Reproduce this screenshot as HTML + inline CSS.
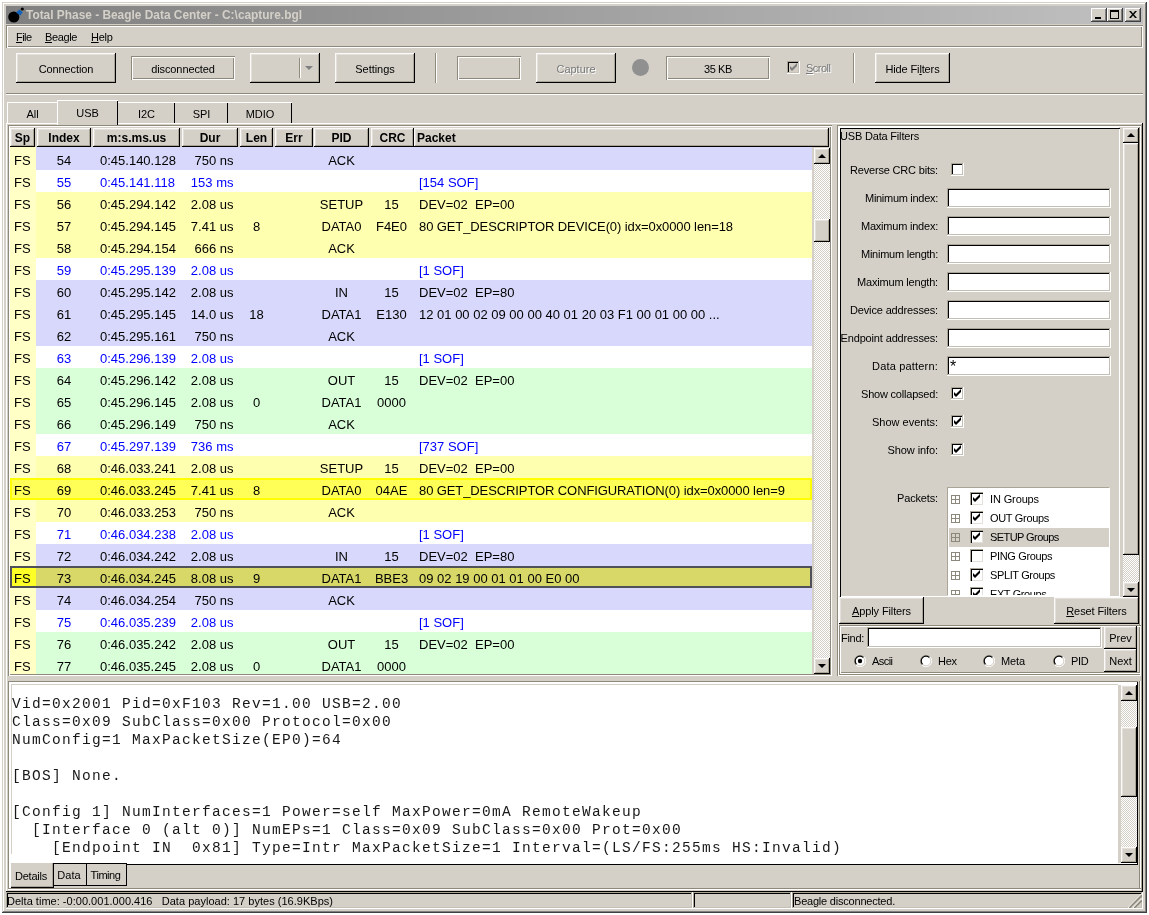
<!DOCTYPE html>
<html><head><meta charset="utf-8"><title>Beagle Data Center</title>
<style>
*{box-sizing:border-box;margin:0;padding:0}
html,body{width:1149px;height:915px;overflow:hidden;background:#fff}
body{font-family:"Liberation Sans",sans-serif;font-size:11px;color:#000;position:relative}
.win *{position:absolute}
i{font-style:normal}
u{text-decoration:underline;text-decoration-thickness:1px;text-underline-offset:1px;position:static!important}
.win{will-change:transform;position:absolute;left:2px;top:2px;width:1145px;height:911px;background:#d4d0c8;
 box-shadow:inset -1px -1px #404040,inset 1px 1px #d4d0c8,inset -2px -2px #808080,inset 2px 2px #fff}
.raised{background:#d4d0c8;box-shadow:inset -1px -1px #000,inset 1px 1px #fbfaf9,inset -2px -2px #aba597,inset 2px 2px #e3e0db}
.sysbtn{background:#d4d0c8;box-shadow:inset -1px -1px #404040,inset 1px 1px #fff,inset -2px -2px #808080,inset 2px 2px #d4d0c8}
.sunken{box-shadow:inset -1px -1px #fff,inset 1px 1px #aba597,inset -2px -2px #c4bfb5,inset 2px 2px #000}
.btn{text-align:center;white-space:nowrap}
.t{white-space:nowrap;font-size:11px}
.dis{color:#787878;text-shadow:1px 1px 0 #fff}
/* title */
.title{left:4px;top:4px;width:1137px;height:18px;background:linear-gradient(90deg,#808080,#c0c0c0)}
.title .cap{left:20px;top:1px;color:#d4d0c8;font-weight:bold;font-size:11.9px;line-height:16px;white-space:nowrap}
.cb{width:16px;height:14px;top:2px}
/* table */
.r{left:0;width:802px;height:22px;font-size:13px;line-height:26px;white-space:pre;overflow:hidden}
.r i{top:0;height:22px}
.r .sp{left:0;width:26px;background:#ffffc6;padding-left:4px}
.in{background:#d8d8fc}.sof{background:#fff;color:#0000ff}.setup{background:#ffffb0}.out{background:#d8ffd8}
.hl{background:#ffff58;box-shadow:inset 0 0 0 2px #ffff00}.hl .sp{background:transparent!important}
.sel{background:#d8d868}.sel .sp{background:#ffff28!important}
.sel:after{content:'';position:absolute;left:0;top:0;right:0;bottom:0;box-shadow:inset 0 0 0 2px #505058}
.hl:after{content:'';position:absolute;left:0;top:0;right:0;bottom:0;box-shadow:inset 0 0 0 2px #ffff00}
.r .ix{left:26px;width:56px;text-align:center}
.r .ts{left:90px}
.r .du{left:173.5px;width:50px;text-align:right}
.r .ln{left:230px;width:33px;text-align:center}
.r .pi{left:303px;width:57px;text-align:center}
.r .cr{left:360px;width:43px;text-align:center}
.r .pk{left:409px}
.sof .sp{color:#000}
.hd{top:1px;height:19px;font-weight:bold;font-size:12px;line-height:20px;text-align:center;white-space:nowrap}
.mono{font-family:"Liberation Mono",monospace;font-size:14.5px;letter-spacing:1.3px;line-height:18px;white-space:pre;color:#181818}
.arr-d{width:0;height:0;border:4px solid transparent;border-bottom:0;border-top:4px solid #000}
.arr-u{width:0;height:0;border:4px solid transparent;border-top:0;border-bottom:4px solid #000}
.vsep{width:2px;background:linear-gradient(90deg,#8f897c 50%,#fff 50%)}
.hsep{height:2px;background:linear-gradient(180deg,#8f897c 50%,#fff 50%)}
.chk{left:3px;top:3px;width:7px;height:7px;overflow:visible}
.nbpage{box-shadow:inset -1px -1px #000,inset 1px 1px #fff,inset -2px 0 #aba597}
.tab{text-align:center;font-size:11px;white-space:nowrap;background:#d4d0c8;
 box-shadow:inset 0 1px #fff,inset -1px 0 #000}
.seltab{z-index:2;box-shadow:inset 1px 1px #fff,inset -1px 0 #000}
.sbv{background:#eae8e4;background-image:conic-gradient(#fff 25%,#d4d0c8 0 50%,#fff 0 75%,#d4d0c8 0);background-size:2px 2px}
.rp-content{box-shadow:inset 1px 1px #000,inset -1px -1px #fff,-1px -1px 0 #fff}
.lab{right:209px;text-align:right}
.inp{left:945px;width:164px;height:20px;background:#fff}
.cbx{width:13px;height:13px;background:#fff}
.tree{background:#fff;border:1px solid #aba597;border-right-color:#fff;border-bottom-color:#fff;overflow:hidden}
.tr{left:1px;width:160px;height:19px}
.tr .pl{left:2px;top:5px;width:9px;height:9px;border:1px solid #8c887c;background:linear-gradient(#8c887c,#8c887c) 3px 0/1px 7px no-repeat,linear-gradient(#8c887c,#8c887c) 0 3px/7px 1px no-repeat}
.tr .tcb{left:21px;top:2px;width:13px;height:13px;background:#fff;box-shadow:inset 1px 1px #aba597,inset 2px 2px #000,inset -1px -1px #e3e0db}
.tr span{left:41px;top:3px}
.btab{text-align:center;font-size:11px;white-space:nowrap;background:#d4d0c8;box-shadow:inset 0 1px #000,inset -1px -1px #000,inset 1px 0 #000}
.bsel{z-index:2;box-shadow:inset 1px 0 #fff,inset -1px -1px #000,inset -2px -2px #aba597}
.etched{box-shadow:inset 1px 1px #8f897c,inset -1px -1px #fff,inset 2px 2px #fff,inset -2px -2px #8f897c}
.r.first i{top:1px}
.r.first .sp{top:0;height:23px;line-height:28px}

</style></head>
<body>
<div class="win">
 <div class="title"><span class="cap">Total Phase - Beagle Data Center - C:\capture.bgl</span>
  <svg style="left:1px;top:0" width="18" height="18" viewBox="0 0 18 18"><circle cx="6.8" cy="11" r="5.6" fill="#000"/><path d="M9 6.5 L12.5 3.6 L15.6 6.2 L13.4 9.6 Z" fill="#1060b8"/><circle cx="15.3" cy="3" r="1.6" fill="#000"/></svg>
  <div class="sysbtn cb" style="left:1085px"><b style="left:4px;top:9px;width:6px;height:2px;background:#000"></b></div>
  <div class="sysbtn cb" style="left:1101px"><b style="left:3px;top:2px;width:9px;height:9px;border:1px solid #000;border-top-width:2px"></b></div>
  <div class="sysbtn cb" style="left:1119px"><svg style="left:4px;top:3px" width="8" height="7" viewBox="0 0 8 7"><path d="M0 0h2l2 2.5L6 0h2L5 3.5 8 7H6L4 4.5 2 7H0l3-3.5z" fill="#000"/></svg></div>
 </div>
 <!-- menubar -->
 <div class="etched" style="left:4px;top:23px;width:1137px;height:23px"></div>
 <span class="t" style="letter-spacing:-0.562px;left:14px;top:29px"><u>F</u>ile</span>
 <span class="t" style="letter-spacing:-0.378px;left:43px;top:29px"><u>B</u>eagle</span>
 <span class="t" style="letter-spacing:-0.285px;left:89px;top:29px"><u>H</u>elp</span>
 <!-- toolbar -->
 <div class="raised btn t" style="letter-spacing:-0.116px;left:14px;top:51px;width:100px;height:30px;line-height:32px">Connection</div>
 <div class="etched btn t" style="letter-spacing:-0.111px;left:129px;top:54px;width:104px;height:24px;line-height:26px">disconnected</div>
 <div class="raised" style="left:248px;top:51px;width:70px;height:30px">
   <b style="left:49px;top:5px;width:1px;height:20px;background:#8f897c"></b><b style="left:50px;top:5px;width:1px;height:20px;background:#fff"></b>
   <b class="arr-d" style="left:55px;top:13px;border-top-color:#808080"></b>
 </div>
 <div class="raised btn t" style="letter-spacing:-0.031px;left:333px;top:51px;width:80px;height:30px;line-height:32px">Settings</div>
 <b class="vsep" style="left:433px;top:51px;height:30px"></b>
 <div class="etched" style="left:455px;top:54px;width:64px;height:24px"></div>
 <div class="raised btn t dis" style="letter-spacing:-0.020px;left:534px;top:51px;width:80px;height:30px;line-height:32px">Capture</div>
 <div style="left:630px;top:57px;width:17px;height:17px;border-radius:50%;background:#909090"></div>
 <div class="etched btn t" style="letter-spacing:-0.394px;left:664px;top:54px;width:104px;height:24px;line-height:26px">35 KB</div>
 <div class="sunken" style="left:785px;top:59px;width:13px;height:13px"><svg class="chk" viewBox="0 0 7 7"><path d="M0 2v3l2 2 5-5V-1L2 4z" fill="#808080"/></svg></div>
 <span class="t dis" style="letter-spacing:-0.503px;left:804px;top:60px"><u>S</u>croll</span>
 <b class="vsep" style="left:851px;top:51px;height:30px"></b>
 <div class="raised btn t" style="letter-spacing:-0.137px;left:873px;top:51px;width:75px;height:30px;line-height:32px">Hide Fi<u>l</u>ters</div>
 <b class="hsep" style="left:4px;top:91px;width:1137px"></b>
 <!-- notebook tabs -->
 <div class="nbpage" style="left:4px;top:121px;width:1137px;height:769px"></div>
 <div class="tab" style="left:5px;top:100px;width:51px;height:21px;line-height:24px;box-shadow:inset 1px 1px #fff">All</div>
 <div class="tab" style="left:116px;top:100px;width:57px;height:21px;line-height:24px">I2C</div>
 <div class="tab" style="left:173px;top:100px;width:53px;height:21px;line-height:24px">SPI</div>
 <div class="tab" style="left:226px;top:100px;width:64px;height:21px;line-height:24px">MDIO</div>
 <div class="tab seltab" style="left:55px;top:98px;width:61px;height:25px;line-height:27px">USB</div>
 <!-- table -->
 <div class="etched" style="left:6px;top:123px;width:824px;height:551px"></div>
 <div id="tbl" style="left:8px;top:125px;width:820px;height:547px;overflow:hidden;background:#fff">
  <div style="left:0;top:0;width:820px;height:20px;background:#d4d0c8"></div>
  <div class="hd raised" style="left:0;width:25px">Sp</div>
  <div class="hd raised" style="left:27px;width:54px">Index</div>
  <div class="hd raised" style="left:83px;width:87px">m:s.ms.us</div>
  <div class="hd raised" style="left:172px;width:56px">Dur</div>
  <div class="hd raised" style="left:230px;width:33px">Len</div>
  <div class="hd raised" style="left:265px;width:38px">Err</div>
  <div class="hd raised" style="left:304px;width:55px">PID</div>
  <div class="hd raised" style="left:361px;width:43px">CRC</div>
  <div class="hd raised" style="left:404px;width:415px;text-align:left;padding-left:3px">Packet</div>
  <div class="r in first" style="top:20px;height:23px"><i class="sp">FS</i><i class="ix">54</i><i class="ts">0:45.140.128</i><i class="du">750 ns</i><i class="pi">ACK</i></div>
<div class="r sof" style="top:43px"><i class="sp">FS</i><i class="ix">55</i><i class="ts">0:45.141.118</i><i class="du">153 ms</i><i class="pk">[154 SOF]</i></div>
<div class="r setup" style="top:65px"><i class="sp">FS</i><i class="ix">56</i><i class="ts">0:45.294.142</i><i class="du">2.08 us</i><i class="pi">SETUP</i><i class="cr">15</i><i class="pk">DEV=02  EP=00</i></div>
<div class="r setup" style="top:87px"><i class="sp">FS</i><i class="ix">57</i><i class="ts">0:45.294.145</i><i class="du">7.41 us</i><i class="ln">8</i><i class="pi">DATA0</i><i class="cr">F4E0</i><i class="pk" style="letter-spacing:-.1px">80 GET_DESCRIPTOR DEVICE(0) idx=0x0000 len=18</i></div>
<div class="r setup" style="top:109px"><i class="sp">FS</i><i class="ix">58</i><i class="ts">0:45.294.154</i><i class="du">666 ns</i><i class="pi">ACK</i></div>
<div class="r sof" style="top:131px"><i class="sp">FS</i><i class="ix">59</i><i class="ts">0:45.295.139</i><i class="du">2.08 us</i><i class="pk">[1 SOF]</i></div>
<div class="r in" style="top:153px"><i class="sp">FS</i><i class="ix">60</i><i class="ts">0:45.295.142</i><i class="du">2.08 us</i><i class="pi">IN</i><i class="cr">15</i><i class="pk">DEV=02  EP=80</i></div>
<div class="r in" style="top:175px"><i class="sp">FS</i><i class="ix">61</i><i class="ts">0:45.295.145</i><i class="du">14.0 us</i><i class="ln">18</i><i class="pi">DATA1</i><i class="cr">E130</i><i class="pk">12 01 00 02 09 00 00 40 01 20 03 F1 00 01 00 00 ...</i></div>
<div class="r in" style="top:197px"><i class="sp">FS</i><i class="ix">62</i><i class="ts">0:45.295.161</i><i class="du">750 ns</i><i class="pi">ACK</i></div>
<div class="r sof" style="top:219px"><i class="sp">FS</i><i class="ix">63</i><i class="ts">0:45.296.139</i><i class="du">2.08 us</i><i class="pk">[1 SOF]</i></div>
<div class="r out" style="top:241px"><i class="sp">FS</i><i class="ix">64</i><i class="ts">0:45.296.142</i><i class="du">2.08 us</i><i class="pi">OUT</i><i class="cr">15</i><i class="pk">DEV=02  EP=00</i></div>
<div class="r out" style="top:263px"><i class="sp">FS</i><i class="ix">65</i><i class="ts">0:45.296.145</i><i class="du">2.08 us</i><i class="ln">0</i><i class="pi">DATA1</i><i class="cr">0000</i></div>
<div class="r out" style="top:285px"><i class="sp">FS</i><i class="ix">66</i><i class="ts">0:45.296.149</i><i class="du">750 ns</i><i class="pi">ACK</i></div>
<div class="r sof" style="top:307px"><i class="sp">FS</i><i class="ix">67</i><i class="ts">0:45.297.139</i><i class="du">736 ms</i><i class="pk">[737 SOF]</i></div>
<div class="r setup" style="top:329px"><i class="sp">FS</i><i class="ix">68</i><i class="ts">0:46.033.241</i><i class="du">2.08 us</i><i class="pi">SETUP</i><i class="cr">15</i><i class="pk">DEV=02  EP=00</i></div>
<div class="r hl" style="top:351px"><i class="sp">FS</i><i class="ix">69</i><i class="ts">0:46.033.245</i><i class="du">7.41 us</i><i class="ln">8</i><i class="pi">DATA0</i><i class="cr">04AE</i><i class="pk" style="letter-spacing:-.1px">80 GET_DESCRIPTOR CONFIGURATION(0) idx=0x0000 len=9</i></div>
<div class="r setup" style="top:373px"><i class="sp">FS</i><i class="ix">70</i><i class="ts">0:46.033.253</i><i class="du">750 ns</i><i class="pi">ACK</i></div>
<div class="r sof" style="top:395px"><i class="sp">FS</i><i class="ix">71</i><i class="ts">0:46.034.238</i><i class="du">2.08 us</i><i class="pk">[1 SOF]</i></div>
<div class="r in" style="top:417px"><i class="sp">FS</i><i class="ix">72</i><i class="ts">0:46.034.242</i><i class="du">2.08 us</i><i class="pi">IN</i><i class="cr">15</i><i class="pk">DEV=02  EP=80</i></div>
<div class="r sel" style="top:439px"><i class="sp">FS</i><i class="ix">73</i><i class="ts">0:46.034.245</i><i class="du">8.08 us</i><i class="ln">9</i><i class="pi">DATA1</i><i class="cr">BBE3</i><i class="pk">09 02 19 00 01 01 00 E0 00</i></div>
<div class="r in" style="top:461px"><i class="sp">FS</i><i class="ix">74</i><i class="ts">0:46.034.254</i><i class="du">750 ns</i><i class="pi">ACK</i></div>
<div class="r sof" style="top:483px"><i class="sp">FS</i><i class="ix">75</i><i class="ts">0:46.035.239</i><i class="du">2.08 us</i><i class="pk">[1 SOF]</i></div>
<div class="r out" style="top:505px"><i class="sp">FS</i><i class="ix">76</i><i class="ts">0:46.035.242</i><i class="du">2.08 us</i><i class="pi">OUT</i><i class="cr">15</i><i class="pk">DEV=02  EP=00</i></div>
<div class="r out" style="top:527px"><i class="sp">FS</i><i class="ix">77</i><i class="ts">0:46.035.245</i><i class="du">2.08 us</i><i class="ln">0</i><i class="pi">DATA1</i><i class="cr">0000</i></div>
  <div style="left:802px;top:20px;width:2px;height:527px;background:#d4d0c8"></div><div style="left:804px;top:20px;width:16px;height:1px;background:#d4d0c8"></div>
  <div class="sbv" style="left:804px;top:21px;width:16px;height:526px">
    <div class="raised" style="left:0;top:0;width:16px;height:16px"><b class="arr-u" style="left:4px;top:6px"></b></div>
    <div class="raised" style="left:0;top:71px;width:16px;height:23px"></div>
    <div class="raised" style="left:0;top:510px;width:16px;height:16px"><b class="arr-d" style="left:4px;top:6px"></b></div>
  </div>
 </div>
  <!-- right panel: coordinates relative to .win (target minus 2) -->
 <div class="etched" style="left:835px;top:123px;width:304px;height:551px"></div>
 <div class="rp-content" style="left:838px;top:126px;width:280px;height:469px"></div>
 <span class="t" style="letter-spacing:-0.183px;left:838px;top:128px">USB Data Filters</span>
 <span class="t lab" style="letter-spacing:-0.181px;top:162px">Reverse CRC bits:</span>
 <div class="sunken cbx" style="left:949px;top:161px"></div>
 <span class="t lab" style="letter-spacing:-0.288px;top:190px">Minimum index:</span><div class="sunken inp" style="top:186px"></div>
 <span class="t lab" style="letter-spacing:-0.220px;top:218px">Maximum index:</span><div class="sunken inp" style="top:214px"></div>
 <span class="t lab" style="letter-spacing:-0.247px;top:246px">Minimum length:</span><div class="sunken inp" style="top:242px"></div>
 <span class="t lab" style="letter-spacing:-0.184px;top:274px">Maximum length:</span><div class="sunken inp" style="top:270px"></div>
 <span class="t lab" style="letter-spacing:-0.147px;top:302px">Device addresses:</span><div class="sunken inp" style="top:298px"></div>
 <span class="t lab" style="letter-spacing:-0.147px;top:330px">Endpoint addresses:</span><div class="sunken inp" style="top:326px"></div>
 <span class="t lab" style="letter-spacing:0.185px;top:358px">Data pattern:</span><div class="sunken inp" style="top:354px"><span class="t" style="left:3px;top:3px;font-size:16px;line-height:16px">*</span></div>
 <span class="t lab" style="letter-spacing:-0.207px;top:386px">Show collapsed:</span><div class="sunken cbx" style="left:949px;top:385px"><svg class="chk" viewBox="0 0 7 7"><path d="M0 2v3l2 2 5-5V-1L2 4z" fill="#000"/></svg></div>
 <span class="t lab" style="letter-spacing:-0.004px;top:414px">Show events:</span><div class="sunken cbx" style="left:949px;top:413px"><svg class="chk" viewBox="0 0 7 7"><path d="M0 2v3l2 2 5-5V-1L2 4z" fill="#000"/></svg></div>
 <span class="t lab" style="letter-spacing:-0.087px;top:442px">Show info:</span><div class="sunken cbx" style="left:949px;top:441px"><svg class="chk" viewBox="0 0 7 7"><path d="M0 2v3l2 2 5-5V-1L2 4z" fill="#000"/></svg></div>
 <span class="t lab" style="letter-spacing:-0.148px;top:490px">Packets:</span>
 <div class="tree" style="left:945px;top:485px;width:163px;height:109px">
   <div class="tr" style="top:2px"><b class="pl"></b><div class="tcb"><svg class="chk" viewBox="0 0 7 7"><path d="M0 2v3l2 2 5-5V-1L2 4z" fill="#000"/></svg></div><span class="t" style="letter-spacing:-0.127px;">IN Groups</span></div>
   <div class="tr" style="top:21px"><b class="pl"></b><div class="tcb"><svg class="chk" viewBox="0 0 7 7"><path d="M0 2v3l2 2 5-5V-1L2 4z" fill="#000"/></svg></div><span class="t" style="letter-spacing:-0.316px;">OUT Groups</span></div>
   <div class="tr" style="top:40px;background:#d4d0c8"><b class="pl"></b><div class="tcb"><svg class="chk" viewBox="0 0 7 7"><path d="M0 2v3l2 2 5-5V-1L2 4z" fill="#000"/></svg></div><span class="t" style="letter-spacing:-0.576px;">SETUP Groups</span></div>
   <div class="tr" style="top:59px"><b class="pl"></b><div class="tcb"></div><span class="t" style="letter-spacing:-0.348px;">PING Groups</span></div>
   <div class="tr" style="top:78px"><b class="pl"></b><div class="tcb"><svg class="chk" viewBox="0 0 7 7"><path d="M0 2v3l2 2 5-5V-1L2 4z" fill="#000"/></svg></div><span class="t" style="letter-spacing:-0.375px;">SPLIT Groups</span></div>
   <div class="tr" style="top:97px"><b class="pl"></b><div class="tcb"><svg class="chk" viewBox="0 0 7 7"><path d="M0 2v3l2 2 5-5V-1L2 4z" fill="#000"/></svg></div><span class="t" style="letter-spacing:-0.403px;">EXT Groups</span></div>
 </div>
 <!-- right scrollbar -->
 <div class="sbv" style="left:1121px;top:126px;width:16px;height:469px">
    <div class="raised" style="left:0;top:0;width:16px;height:15px"><b class="arr-u" style="left:4px;top:5px"></b></div>
    <div class="raised" style="left:0;top:15px;width:16px;height:412px"></div>
    <div class="raised" style="left:0;top:454px;width:16px;height:15px"><b class="arr-d" style="left:4px;top:6px"></b></div>
 </div>
 <div class="raised btn t" style="letter-spacing:-0.118px;left:837px;top:595px;width:85px;height:27px;line-height:28px"><u>A</u>pply Filters</div>
 <div class="raised btn t" style="letter-spacing:-0.096px;left:1052px;top:595px;width:85px;height:27px;line-height:28px"><u>R</u>eset Filters</div>
 <!-- find panel -->
 <div class="etched" style="left:837px;top:623px;width:302px;height:49px"></div>
 <span class="t" style="letter-spacing:-0.294px;left:839px;top:630px">Find:</span>
 <div class="sunken" style="left:865px;top:625px;width:235px;height:21px;background:#fff"></div>
 <div class="raised btn t" style="left:1102px;top:624px;width:33px;height:23px;line-height:25px">Prev</div>
 <div class="raised btn t" style="left:1102px;top:647px;width:33px;height:23px;line-height:25px">Next</div>
 <svg class="radio" style="left:852px;top:653px" width="12" height="12" viewBox="0 0 12 12"><circle cx="6" cy="6" r="5" fill="#fff"/><path d="M10.1 1.9A5.8 5.8 0 0 0 1.9 10.1" stroke="#aba597" fill="none"/><path d="M10.1 1.9A5.8 5.8 0 0 1 1.9 10.1" stroke="#fff" fill="none"/><path d="M9.4 2.6A4.8 4.8 0 0 0 2.6 9.4" stroke="#000" stroke-width="1.2" fill="none"/><path d="M9.4 2.6A4.8 4.8 0 0 1 2.6 9.4" stroke="#d4d0c8" fill="none"/><circle cx="6" cy="6" r="2.2" fill="#000"/></svg><span class="t" style="letter-spacing:-0.547px;left:870px;top:653px">Ascii</span>
 <svg class="radio" style="left:918px;top:653px" width="12" height="12" viewBox="0 0 12 12"><circle cx="6" cy="6" r="5" fill="#fff"/><path d="M10.1 1.9A5.8 5.8 0 0 0 1.9 10.1" stroke="#aba597" fill="none"/><path d="M10.1 1.9A5.8 5.8 0 0 1 1.9 10.1" stroke="#fff" fill="none"/><path d="M9.4 2.6A4.8 4.8 0 0 0 2.6 9.4" stroke="#000" stroke-width="1.2" fill="none"/><path d="M9.4 2.6A4.8 4.8 0 0 1 2.6 9.4" stroke="#d4d0c8" fill="none"/></svg><span class="t" style="letter-spacing:-0.254px;left:936px;top:653px">Hex</span>
 <svg class="radio" style="left:981px;top:653px" width="12" height="12" viewBox="0 0 12 12"><circle cx="6" cy="6" r="5" fill="#fff"/><path d="M10.1 1.9A5.8 5.8 0 0 0 1.9 10.1" stroke="#aba597" fill="none"/><path d="M10.1 1.9A5.8 5.8 0 0 1 1.9 10.1" stroke="#fff" fill="none"/><path d="M9.4 2.6A4.8 4.8 0 0 0 2.6 9.4" stroke="#000" stroke-width="1.2" fill="none"/><path d="M9.4 2.6A4.8 4.8 0 0 1 2.6 9.4" stroke="#d4d0c8" fill="none"/></svg><span class="t" style="letter-spacing:-0.117px;left:999px;top:653px">Meta</span>
 <svg class="radio" style="left:1051px;top:653px" width="12" height="12" viewBox="0 0 12 12"><circle cx="6" cy="6" r="5" fill="#fff"/><path d="M10.1 1.9A5.8 5.8 0 0 0 1.9 10.1" stroke="#aba597" fill="none"/><path d="M10.1 1.9A5.8 5.8 0 0 1 1.9 10.1" stroke="#fff" fill="none"/><path d="M9.4 2.6A4.8 4.8 0 0 0 2.6 9.4" stroke="#000" stroke-width="1.2" fill="none"/><path d="M9.4 2.6A4.8 4.8 0 0 1 2.6 9.4" stroke="#d4d0c8" fill="none"/></svg><span class="t" style="letter-spacing:-0.348px;left:1069px;top:653px">PID</span>

  <!-- bottom text panel -->
 <div style="left:6px;top:679px;width:1130px;height:184px;background:#fff;box-shadow:inset 1px 1px #8f897c,inset -1px -1px #000"></div>
 <div style="left:9px;top:682px;width:1107px;height:170px;box-shadow:inset 1px 1px #d4d0c8"></div>
 <b class="vsep" style="left:1137px;top:679px;height:209px"></b>
 <div class="mono" style="left:10px;top:693px">Vid=0x2001 Pid=0xF103 Rev=1.00 USB=2.00
Class=0x09 SubClass=0x00 Protocol=0x00
NumConfig=1 MaxPacketSize(EP0)=64

[BOS] None.

[Config 1] NumInterfaces=1 Power=self MaxPower=0mA RemoteWakeup
  [Interface 0 (alt 0)] NumEPs=1 Class=0x09 SubClass=0x00 Prot=0x00
    [Endpoint IN  0x81] Type=Intr MaxPacketSize=1 Interval=(LS/FS:255ms HS:Invalid)</div>
 <div style="left:1116px;top:683px;width:3px;height:178px;background:#d4d0c8"></div>
 <div class="sbv" style="left:1119px;top:683px;width:16px;height:178px">
    <div class="raised" style="left:0;top:0;width:16px;height:16px"><b class="arr-u" style="left:4px;top:6px"></b></div>
    <div class="raised" style="left:0;top:42px;width:16px;height:70px"></div>
    <div class="raised" style="left:0;top:162px;width:16px;height:16px"><b class="arr-d" style="left:4px;top:6px"></b></div>
 </div>
 <!-- bottom tabs -->
 <div class="btab" style="letter-spacing:0.062px;left:51px;top:861px;width:34px;height:23px;line-height:24px;padding-right:2px">Data</div>
 <div class="btab" style="letter-spacing:-0.435px;left:84px;top:861px;width:41px;height:23px;line-height:24px;padding-right:2px">Timing</div>
 <div class="btab bsel" style="letter-spacing:-0.232px;left:8px;top:861px;width:44px;height:25px;line-height:26px;padding-right:2px">Details</div>
 <b class="hsep" style="left:6px;top:886px;width:1133px"></b>
 <b class="vsep" style="left:6px;top:861px;height:25px;z-index:3"></b>
 <!-- status bar -->
 <div class="sunken" style="left:4px;top:890px;width:687px;height:17px"></div>
 <div class="sunken" style="left:691px;top:890px;width:99px;height:17px"></div>
 <div class="sunken" style="left:790px;top:890px;width:351px;height:17px"></div>
 <span class="t" style="letter-spacing:0.020px;left:5px;top:893px">Delta time: -0:00.001.000.416&nbsp;&nbsp; Data payload: 17 bytes (16.9KBps)</span>
 <span class="t" style="letter-spacing:-0.209px;left:792px;top:893px">Beagle disconnected.</span>
 <svg style="left:1126px;top:892px" width="14" height="14" viewBox="0 0 14 14"><path d="M14 0L0 14M14 5L5 14" stroke="#fff" stroke-width="1.2"/><path d="M14 1.2L1.2 14M14 6.2L6.2 14" stroke="#8f897c" stroke-width="1.7"/></svg>

</div>

</body></html>
